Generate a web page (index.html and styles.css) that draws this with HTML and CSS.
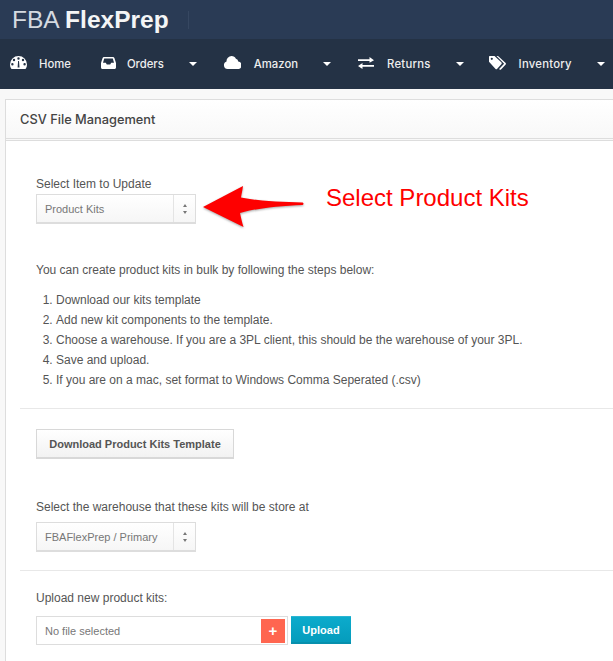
FILE: index.html
```html
<!DOCTYPE html>
<html lang="en">
<head>
  <meta charset="UTF-8" />
  <title>CSV File Management</title>
  <link rel="stylesheet" href="styles.css">
</head>
<body>
  <header class="topbar">
    <div class="logo">FBA <b>FlexPrep</b></div>
    <span class="logo-rule"></span>
  </header>

  <nav class="nav">
    <a class="nav-item home">
      <svg class="nav-icon" width="17" height="13" viewBox="0 0 17 13"><path fill="#fff" fill-rule="evenodd" d="M8.500 0A8.500 8.500 0 0 0 0 8.500c0 1.500.4 2.900 1.100 4.100.1.200.3.400.6.400h13.600c.3 0 .5-.2.6-.4.700-1.200 1.100-2.600 1.100-4.100A8.500 8.500 0 0 0 8.500 0zM8.500 1.300a1.200 1.200 0 1 1 0 2.400 1.200 1.200 0 0 1 0-2.400zM4 2.800a1.200 1.200 0 1 1 0 2.400 1.200 1.200 0 0 1 0-2.400zM13 2.800a1.200 1.200 0 1 1 0 2.400 1.200 1.200 0 0 1 0-2.400zM2.400 7a1.200 1.200 0 1 1 0 2.400 1.200 1.200 0 0 1 0-2.400zM14.600 7a1.200 1.200 0 1 1 0 2.400 1.200 1.200 0 0 1 0-2.400zM7.600 11.500 8.100 5h.9l.5 6.500z"/></svg>
      Home
    </a>
    <a class="nav-item orders">
      <svg class="nav-icon" width="15" height="12" viewBox="0 0 15 12"><path fill="#fff" fill-rule="evenodd" d="M3 0h9c.6 0 1.100.3 1.400.9L15 6v4.500c0 .9-.7 1.500-1.500 1.500h-12C.7 12 0 11.400 0 10.500V6L1.600.9C1.900.3 2.400 0 3 0zm.2 1.600L2 5.800h2.800l1 1.800h3.400l1-1.800H13l-1.200-4.200z"/></svg>
      Orders
      <i class="caret"></i>
    </a>
    <a class="nav-item amazon">
      <svg class="nav-icon" width="17" height="13" viewBox="0 0 17 13"><path fill="#fff" d="M3.800 13a3.800 3.800 0 0 1-1.300-7.400A5.200 5.200 0 0 1 7.600 0c1.900 0 3.500 1 4.300 2.700A3 3 0 0 1 14.200 5.600 3.700 3.700 0 0 1 13.400 13z"/></svg>
      Amazon
      <i class="caret"></i>
    </a>
    <a class="nav-item returns">
      <svg class="nav-icon" width="16" height="12" viewBox="0 0 16 12"><path fill="#fff" d="M0 2.200h11.500V0L16 3.200l-4.500 2.600V4H0zM16 8H4.500V6L0 8.900 4.500 12V9.800H16z"/></svg>
      Returns
      <i class="caret"></i>
    </a>
    <a class="nav-item inventory">
      <svg class="nav-icon" width="18" height="14" viewBox="0 0 18 14"><path fill="#fff" fill-rule="evenodd" d="M0 1C0 .4.400 0 1 0h4.500l7 6.600c.4.400.4 1 0 1.400L8 13c-.4.400-1 .4-1.400 0L0 5.800zM2.800 1.700a1.100 1.100 0 1 0 0 2.200 1.100 1.100 0 0 0 0-2.200z"/><path fill="#fff" d="M7.500 0H9l7.700 7c.4.400.4 1 0 1.400L12 13.500c-.4.400-1 .4-1.400 0l-.5-.5 5-5.300z"/></svg>
      Inventory
      <i class="caret"></i>
    </a>
  </nav>

  <main class="panel">
    <h1 class="panel-title">CSV File Management</h1>

    <div class="panel-body">
      <section class="block first">
        <label class="field-label">Select Item to Update</label>
        <div class="select">
          <span class="select-value">Product Kits</span>
          <span class="select-arrows"><i class="up"></i><i class="down"></i></span>
        </div>

        <svg class="arrow" width="106" height="46" viewBox="0 0 106 46"><path fill="#fe0000" d="M1 22 41 1C40.500 5 39.500 9 39 12.500 55 16 80 17 100 17.500c2 0 2 2.500 0 2.500C80 21 55 23 38 28c1 5 2 9 3.500 14z"/></svg>
        <span class="callout">Select Product Kits</span>

        <p class="intro">You can create product kits in bulk by following the steps below:</p>
        <ol class="steps">
          <li>Download our kits template</li>
          <li>Add new kit components to the template.</li>
          <li>Choose a warehouse. If you are a 3PL client, this should be the warehouse of your 3PL.</li>
          <li>Save and upload.</li>
          <li>If you are on a mac, set format to Windows Comma Seperated (.csv)</li>
        </ol>
      </section>

      <section class="block download">
        <button class="btn">Download Product Kits Template</button>
        <label class="field-label warehouse-label">Select the warehouse that these kits will be store at</label>
        <div class="select">
          <span class="select-value">FBAFlexPrep / Primary</span>
          <span class="select-arrows"><i class="up"></i><i class="down"></i></span>
        </div>
      </section>

      <section class="block upload">
        <label class="field-label">Upload new product kits:</label>
        <div class="upload-row">
          <div class="file-input">
            <span>No file selected</span>
            <span class="file-plus">+</span>
          </div>
          <button class="btn-upload">Upload</button>
        </div>
      </section>
    </div>
  </main>
</body>
</html>
```

FILE: styles.css
```css
html, body {
  margin: 0;
  height: 661px;
  overflow: hidden;
}
body {
  font-family: "Liberation Sans", Arial, sans-serif;
  background-color: #f8f8f8;
  color: #555;
}
.topbar {
  height: 39px;
  background-color: #2a3b55;
  display: flex;
  align-items: center;
  padding-left: 12px;
  box-sizing: border-box;
}
.logo {
  font-size: 24.500px;
  color: #d5dae0;
  width: 176px;
  white-space: nowrap;
}
.logo b {
  color: #f4f5f6;
}
.logo-rule {
  width: 1px;
  height: 18px;
  background-color: #364761;
}
.nav {
  height: 50px;
  background-color: #243245;
  display: flex;
  align-items: center;
  font-family: Inter, sans-serif;
  font-size: 11.300px;
  font-weight: 500;
  color: #eee;
  white-space: nowrap;
  padding-left: 10px;
  box-sizing: border-box;
}
.nav-item {
  display: flex;
  align-items: center;
}
.nav-icon {
  margin-right: 12px;
  margin-bottom: 3px;
}
.orders .nav-icon { margin-right: 11px; }
.amazon .nav-icon, .returns .nav-icon { margin-right: 13px; }
.caret {
  width: 0;
  height: 0;
  border: 4px solid transparent;
  border-top-color: #fff;
  border-bottom: 0;
  margin-left: 25px;
}
.home { margin-right: 30px; }
.orders { margin-right: 27px; }
.amazon { margin-right: 27px; }
.returns { margin-right: 25px; letter-spacing: 0.25px; }
.inventory { letter-spacing: 0.25px; }
.panel {
  margin: 10px 0 0 5px;
  height: 562px;
  background-color: #f8f8f8;
  border-left: 1px solid #ddd;
  border-top: 1px solid #ddd;
}
.panel-title {
  margin: 0;
  height: 38px;
  line-height: 39px;
  padding-left: 14px;
  font-family: Inter, sans-serif;
  font-size: 12.800px;
  font-weight: 500;
  color: #444;
  background: linear-gradient(#fff, #f8f8f8);
  border-bottom: 1px solid #ddd;
}
.panel-body {
  margin-top: 1px;
  height: 522px;
  padding-left: 14px;
  font-size: 12px;
  background-color: #fff;
  border-top: 1px solid #ddd;
}
.block {
  padding-left: 16px;
  border-bottom: 1px solid #e8e8e8;
}
.first {
  position: relative;
  padding-top: 36px;
  height: 268px;
  box-sizing: border-box;
}
.field-label {
  display: block;
  height: 14px;
  line-height: 14px;
  margin-bottom: 3px;
}
.select {
  width: 158px;
  height: 27px;
  display: flex;
  border: 1px solid #ddd;
  border-bottom-width: 2px;
  background: linear-gradient(#fff, #f6f6f6);
  font-size: 11px;
  color: #777;
}
.select-value {
  flex: 1;
  padding-left: 8px;
  line-height: 28px;
}
.select-arrows {
  width: 21px;
  border-left: 1px solid #e4e4e4;
  display: flex;
  flex-direction: column;
  align-items: center;
  justify-content: center;
  gap: 4px;
}
.select-arrows i {
  width: 0;
  height: 0;
  border: 2.500px solid transparent;
}
.select-arrows .up {
  border-top: 0;
  border-bottom: 3px solid #777;
}
.select-arrows .down {
  border-bottom: 0;
  border-top: 3px solid #777;
}
.arrow {
  position: absolute;
  left: 182px;
  top: 44px;
  filter: drop-shadow(0 1px 1px rgba(0, 0, 0, 0.35));
}
.callout {
  position: absolute;
  left: 306px;
  top: 43px;
  font-size: 24px;
  color: #fe0000;
  white-space: nowrap;
}
.intro {
  margin: 39px 0 0;
  line-height: 14px;
}
.steps {
  margin: 13px 0 0;
  padding-left: 20px;
  line-height: 20px;
}
.download {
  padding-top: 20px;
  height: 162px;
  box-sizing: border-box;
}
.btn {
  display: block;
  width: 198px;
  height: 30px;
  padding: 0;
  border: 1px solid #d8d8d8;
  border-bottom-width: 2px;
  background: linear-gradient(#fff, #f2f2f2);
  font-family: "Liberation Sans", Arial, sans-serif;
  font-size: 11px;
  font-weight: bold;
  color: #555;
}
.warehouse-label {
  margin-top: 41px;
  margin-bottom: 8px;
}
.upload {
  padding-top: 20px;
  border-bottom: 0;
}
.upload .field-label {
  margin-bottom: 11px;
}
.upload-row {
  display: flex;
  align-items: flex-start;
  gap: 3px;
}
.file-input {
  width: 252px;
  height: 29px;
  padding-left: 8px;
  box-sizing: border-box;
  display: flex;
  justify-content: space-between;
  align-items: center;
  border: 1px solid #ddd;
  font-size: 11px;
  color: #777;
}
.file-plus {
  width: 24px;
  height: 24px;
  margin-right: 2px;
  background-color: #ff6650;
  color: #fff;
  font-size: 15px;
  font-weight: bold;
  line-height: 24px;
  text-align: center;
}
.btn-upload {
  width: 60px;
  height: 28px;
  padding: 0;
  border: 0;
  border-top: 1px solid #2bb5d2;
  border-bottom: 2px solid #0790ad;
  background: linear-gradient(#0cabcc, #059cbc);
  color: #fff;
  font-family: "Liberation Sans", Arial, sans-serif;
  font-size: 11px;
  font-weight: bold;
}
```
